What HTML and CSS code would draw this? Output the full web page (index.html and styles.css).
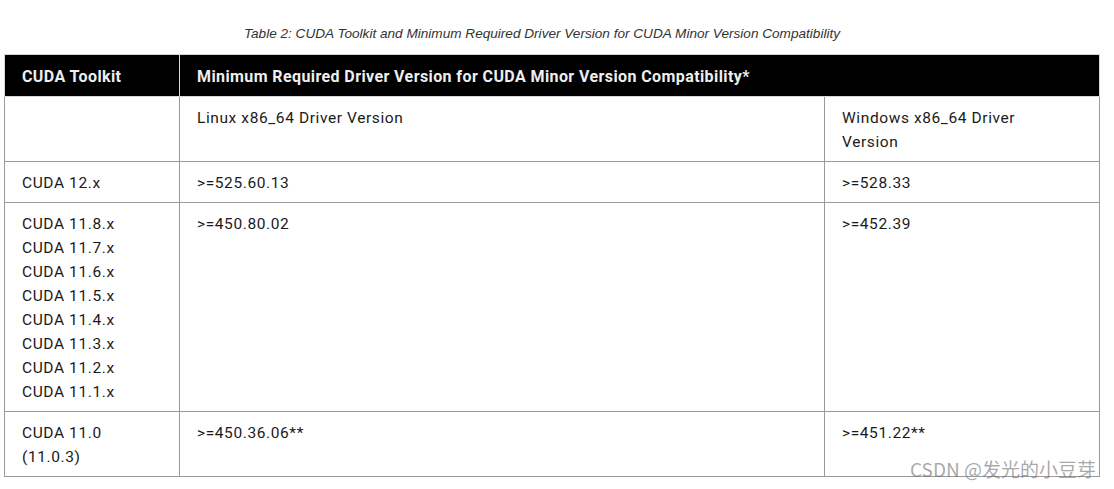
FILE: index.html
```html
<!DOCTYPE html>
<html>
<head>
<meta charset="utf-8">
<link rel="stylesheet" href="styles.css">
</head>
<body>
<div class="page">
  <p class="caption">Table 2: CUDA Toolkit and Minimum Required Driver Version for CUDA Minor Version Compatibility</p>
  <table class="compat">
    <colgroup>
      <col class="c1">
      <col class="c2">
      <col class="c3">
    </colgroup>
    <thead>
      <tr>
        <th>CUDA Toolkit</th>
        <th colspan="2">Minimum Required Driver Version for CUDA Minor Version Compatibility*</th>
      </tr>
    </thead>
    <tbody>
      <tr>
        <td></td>
        <td>Linux x86_64 Driver Version</td>
        <td class="narrow">Windows x86_64 Driver Version</td>
      </tr>
      <tr>
        <td>CUDA 12.x</td>
        <td>&gt;=525.60.13</td>
        <td>&gt;=528.33</td>
      </tr>
      <tr>
        <td>CUDA 11.8.x<br>CUDA 11.7.x<br>CUDA 11.6.x<br>CUDA 11.5.x<br>CUDA 11.4.x<br>CUDA 11.3.x<br>CUDA 11.2.x<br>CUDA 11.1.x</td>
        <td>&gt;=450.80.02</td>
        <td>&gt;=452.39</td>
      </tr>
      <tr>
        <td>CUDA 11.0<br>(11.0.3)</td>
        <td>&gt;=450.36.06**</td>
        <td>&gt;=451.22**</td>
      </tr>
    </tbody>
  </table>
  <div class="watermark">CSDN @发光的小豆芽</div>
</div>
</body>
</html>
```
FILE: styles.css
```css
html, body {
  margin: 0;
  padding: 0;
  background: #fff;
}
.page {
  position: relative;
  width: 1114px;
  height: 489px;
  padding: 0 0 0 4px;
  box-sizing: border-box;
}
.caption {
  margin: 0;
  padding: 26px 18px 0 0;
  height: 28px;
  box-sizing: content-box;
  text-align: center;
  font-family: "Liberation Sans", Arial, sans-serif;
  font-style: italic;
  font-size: 13.6px;
  line-height: 16px;
  color: #333;
  width: 1076px;
}
.compat {
  border-collapse: collapse;
  width: 1095px;
  table-layout: fixed;
  font-family: Roboto, "Liberation Sans", sans-serif;
  color: #1a1a1a;
}
.c1 { width: 175px; }
.c2 { width: 645px; }
.c3 { width: 275px; }
.compat th {
  background: #000;
  color: #eee;
  font-weight: 700;
  font-size: 16px;
  letter-spacing: 0.4px;
  text-align: left;
  height: 42px;
  padding: 1px 17px 0;
  box-sizing: border-box;
  border: 1px solid #d6d6d6;
  vertical-align: middle;
}
.compat td {
  font-size: 15.5px;
  line-height: 24px;
  padding: 9px 17px 7px 17px;
  border: 1px solid #9a9a9a;
  vertical-align: top;
  letter-spacing: 0.6px;
}
.compat td.narrow {
  padding-right: 50px;
}
.watermark {
  position: absolute;
  right: 18px;
  top: 456px;
  font-family: "Noto Sans CJK SC", "Liberation Sans", sans-serif;
  font-size: 19px;
  line-height: 26px;
  color: rgba(110,110,110,0.6);
}
```
